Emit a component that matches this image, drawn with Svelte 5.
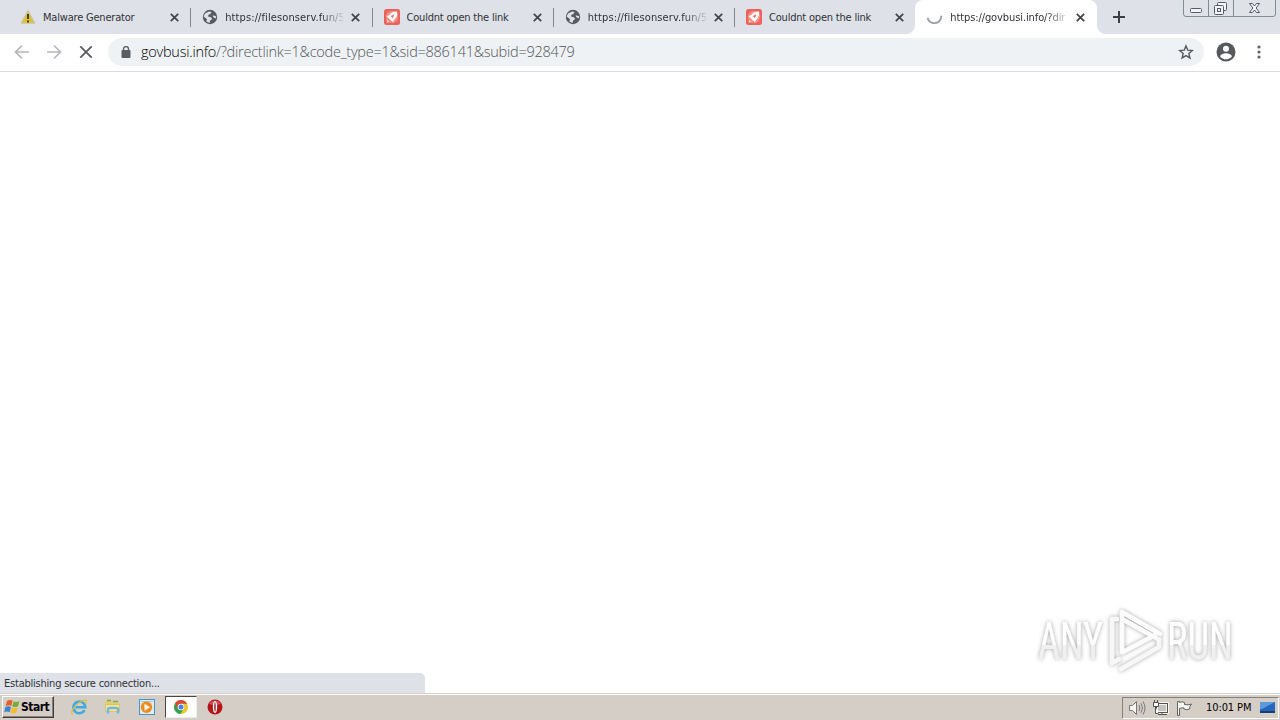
<script>
  const tabs = [
    { icon: 'warn', title: 'Malware Generator' },
    { icon: 'globe', title: 'https://filesonserv.fun/5' },
    { icon: 'rocket', title: 'Couldnt open the link' },
    { icon: 'globe', title: 'https://filesonserv.fun/5' },
    { icon: 'rocket', title: 'Couldnt open the link' },
    { icon: 'spin', title: 'https://govbusi.info/?dir', active: true }
  ];
</script>

<div class="screen">
  <header class="strip">
    {#each tabs as tab, i}
      <div class="tab {tab.icon}" class:active={tab.active} class:sep={i > 0 && !tab.active}>
        <svg class="fav" width="16" height="16" viewBox="0 0 16 16">
          {#if tab.icon === 'warn'}
            <path d="M7 2 13.500 14H.5Z" fill="#dfc02a" stroke="#cdc294" stroke-width="1.500" stroke-linejoin="round" />
            <path d="M7 5v5M7 11.5v2" stroke="#38331c" stroke-width="1.8" />
          {:else if tab.icon === 'globe'}
            <circle cx="8" cy="8" r="7.2" fill="#565b60" />
            <path d="M3 4.5 7 2.4 9.6 3 8.4 5 6.5 5.8 6 7.4 9 8.2 10.2 10 8.2 11.4 7.5 14 4.3 12.4 5 10.3 1.6 7.5ZM10.5 6.2 14.3 7.3 13.7 9.6 11.4 8.3Z" fill="#dee1e6" />
          {:else if tab.icon === 'rocket'}
            <rect width="16" height="16" rx="2.5" fill="#ee625d" />
            <circle cx="8" cy="8" r="6.200" fill="#f28c82" />
            <path d="M13.2 2.6C9.5 2.1 7 3.700 5.200 6L2.700 7.2 4.4 9 7 11.5 9 13.300 10.100 10.700C12.500 9 13.700 6.2 13.2 2.6Z" fill="#fff" />
            <path d="M10.500 5 8.800 9.500 8 8 6.500 7.300Z" fill="#ee6b65" />
            <path d="M3 10.2 5.7 13 2.700 13.700Z" fill="#ffe2b0" />
          {:else}
            <path d="M.5 8.8A7 7 0 0 0 14.3 6.8" fill="none" stroke="#9b9ea2" stroke-width="1.8" />
          {/if}
        </svg>
        <span class="title" class:url={tab.title.startsWith('http')}>{tab.title}</span>
        <svg class="close" width="9" height="9" viewBox="0 0 9 9"><path d="m.8.8 7.4 7.4m0-7.4L.8 8.2" stroke="#44474b" stroke-width="1.8" /></svg>
      </div>
    {/each}
    <svg class="plus" width="12" height="12" viewBox="0 0 12 12"><path d="M6 0v12M0 6h12" stroke="#3c4043" stroke-width="2" /></svg>
    <svg class="caption" width="94" height="18" viewBox="0 0 94 18">
      <path d="M.5 -1V14Q.5 16.500 3 16.500H90Q92.500 16.500 92.500 14V-1" fill="#dfe2e6" stroke="#858b95" />
      <path d="M25.500 0v16M50.500 0v16" stroke="#858b95" />
      <g fill="#f4f5f7" stroke="#555b66">
        <rect x="7.500" y="8.500" width="11" height="4" rx="1" />
        <rect x="34.500" y="2.500" width="9" height="8" rx="1" />
        <rect x="31.500" y="5.500" width="9" height="9" rx="1" />
        <rect x="34.500" y="8.500" width="3" height="3" />
        <path d="M66.500 3.500h3l2 2.500 2-2.500h3l-3.400 4.500 3.400 4.500h-3l-2-2.500-2 2.500h-3L69.900 8Z" />
      </g>
    </svg>
  </header>

  <nav class="toolbar">
    <svg class="nav" width="16" height="16" viewBox="0 0 16 16"><path d="M15 8H2M8 1.500 1.500 8 8 14.500" fill="none" stroke="#b5b7ba" stroke-width="1.700" /></svg>
    <svg class="nav" width="16" height="16" viewBox="0 0 16 16"><path d="M1 8h13M8 1.500 14.500 8 8 14.500" fill="none" stroke="#b5b7ba" stroke-width="1.700" /></svg>
    <svg class="nav" width="16" height="16" viewBox="0 0 16 16"><path d="m2.300 2.300 11.400 11.400m0-11.400L2.300 13.700" stroke="#5a5e62" stroke-width="1.900" /></svg>
    <div class="omnibox">
      <svg width="10" height="12" viewBox="0 0 10 12"><path d="M2.500 5V3a2.500 2.500 0 0 1 5 0v2" fill="none" stroke="#5f6368" stroke-width="1.400" /><rect x=".5" y="4" width="9" height="8" rx="1" fill="#5a5e63" /></svg>
      <span class="address"><b>govbusi.info</b>/?directlink=1&amp;code_type=1&amp;sid=886141&amp;subid=928479</span>
      <svg class="star" width="16" height="16" viewBox="0 0 16 16"><path d="m8 1.900 1.750 4.200 4.550.38-3.450 3 1.050 4.450L8 11.550l-3.900 2.380 1.050-4.450-3.450-3 4.550-.38Z" fill="none" stroke="#55595e" stroke-width="1.400" /></svg>
    </div>
    <svg class="user" width="20" height="20" viewBox="0 0 20 20"><circle cx="10" cy="10" r="9.500" fill="#55595e" /><circle cx="10" cy="6.800" r="3" fill="#fff" /><path d="M4 14.200c1.500-4 10.500-4 12 0-3 4.200-9 4.200-12 0Z" fill="#fff" /></svg>
    <svg class="dots" width="4" height="14" viewBox="0 0 4 14" fill="#5f6368"><circle cx="2" cy="2" r="1.600" /><circle cx="2" cy="7" r="1.600" /><circle cx="2" cy="12" r="1.600" /></svg>
  </nav>

  <main>
    <svg class="mark" width="204" height="70" viewBox="0 0 204 70">
      <defs>
        <linearGradient id="fade" x1="0" y1="0" x2="0" y2="1"><stop offset=".56" stop-color="#fff" /><stop offset=".56" stop-color="#f0f0f0" /></linearGradient>
        <filter id="glow" x="-10%" y="-20%" width="120%" height="140%"><feDropShadow dx="0" dy="0" stdDeviation="1.900" flood-color="#777" flood-opacity=".7" /></filter>
      </defs>
      <g filter="url(#glow)">
        <g fill="url(#fade)" font-family="Roboto, sans-serif" font-size="51">
          <text x="4" y="54" textLength="65" lengthAdjust="spacingAndGlyphs">ANY</text>
          <text x="133" y="54" textLength="66" lengthAdjust="spacingAndGlyphs">RUN</text>
        </g>
        <g fill="none" stroke="#fcfcfc" stroke-width="4.500" stroke-linejoin="round" stroke-linecap="round">
          <path d="M88 47V7l38 22M88 14l36 20M89 47l32-17" />
          <path d="M83 14h-5v44l7-4M87 64l38-22v-8" stroke="#f7f7f7" />
        </g>
      </g>
    </svg>
  </main>
  <div class="status"><span>Establishing secure connection...</span></div>

  <footer class="taskbar">
    <div class="start">
      <svg width="17" height="16" viewBox="0 0 17 16"><path d="M3 2q3-2 5.500-.2L7.300 7Q5 5.300 1.700 7Z" fill="#e75b24" /><path d="M9.500 2.200q3 1.500 6-.3L14 7.200q-3 1.700-5.700.2Z" fill="#75ad36" /><path d="M1.400 8Q4 6.400 7 8L5.700 13.200q-2.700-1.500-5.500 0Z" fill="#3d83cf" /><path d="M8 8.500q3 1.500 5.800-.2l-1.400 5.200q-3 2-5.700.2Z" fill="#f6bc2b" /></svg>
      <span>Start</span>
    </div>
    <div class="task">
      <svg width="18" height="18" viewBox="0 0 18 18"><path d="M14.500 12.200A5.900 5.900 0 1 1 15.200 9.300H5.500" fill="none" stroke="#3fabdf" stroke-width="2.600" /><path d="M3 16C-1 16 4 7 11 3.500c5-2.700 6.500-1 4.500 1.800" fill="none" stroke="#dfbd4e" stroke-width="1.300" /></svg>
    </div>
    <div class="task">
      <svg width="18" height="18" viewBox="0 0 18 18"><path d="M1.500 3h5l1 1.500h8V14h-14Z" fill="#e8cc69" /><path d="M3 2.500h4M9 3.500h5" stroke="#71b052" stroke-width="1.500" /><path d="M1.500 6.500h14v7h-14Z" fill="#f6e59a" stroke="#cdb35b" stroke-width=".6" /><path d="M4 15.500v-4q0-1.500 2-1.500h6q2 0 2 1.500v4" fill="none" stroke="#70b8de" stroke-width="2.400" /></svg>
    </div>
    <div class="task">
      <svg width="18" height="18" viewBox="0 0 18 18"><rect x="1.500" y="1.500" width="15" height="15" fill="#d8edfa" stroke="#4b91c3" /><path d="M3 3.500h12" stroke="#9acbe8" /><circle cx="8.500" cy="9.200" r="5.700" fill="#f18a18" /><path d="m6.500 5.700 5.500 3.500-5.500 3.500Z" fill="#fff" /></svg>
    </div>
    <div class="task pressed">
      <svg width="16" height="16" viewBox="0 0 16 16"><circle cx="8" cy="8" r="7" fill="#f0c52c" /><path d="M8 8 4.500 10.500 1.900 4.500A7 7 0 0 1 14.200 4.700H8Z" fill="#dc4637" /><path d="M1.900 4.500A7 7 0 0 0 7.500 15L10.500 10 5 9.800Z" fill="#35a253" /><circle cx="8" cy="8" r="3.300" fill="#fff" /><circle cx="8" cy="8" r="2.500" fill="#4284e8" /></svg>
    </div>
    <div class="task">
      <svg width="16" height="16" viewBox="0 0 16 16"><circle cx="8" cy="8" r="7.500" fill="#b31519" /><path d="M2 5a7 7 0 0 1 12 0Q8 7 2 5Z" fill="#cf5050" /><ellipse cx="8" cy="8" rx="2.200" ry="6" fill="#fff" /><ellipse cx="8" cy="8" rx=".7" ry="4.700" fill="#8d1015" /></svg>
    </div>
    <div class="tray">
      <svg width="18" height="16" viewBox="0 0 18 16" fill="none" stroke="#77787a"><path d="M1.500 5.500h3l4-4v13l-4-4h-3Z" fill="#f5f4f2" /><path d="M11 5q1.500 3 0 6M13 3.200q3 4.800 0 9.600M15 1.500q4 6.500 0 13" /></svg>
      <svg width="18" height="16" viewBox="0 0 18 16" fill="none" stroke="#55534f"><rect x="4.500" y="3.500" width="11" height="9" fill="#c4c3c0" stroke="#f5f5f5" stroke-width="3" /><rect x="4.500" y="3.500" width="11" height="9" /><path d="M6 14.500h9M10 12.500v2" /><path d="M1.500 2.500h5v4h-5ZM2.500 0v2.500m3-2.500v2.500M3.500 6.500v7h3" fill="#fff" /></svg>
      <svg width="18" height="16" viewBox="0 0 18 16"><path d="M1.500 15.500V1.500H3.500V2.500Q6 1 8.500 2.500V4.500Q12 5.500 15.500 4Q13.500 6 13.500 9Q11 10.500 8 9V8Q6 7.500 3.500 8.500V15.500Z" fill="#f7f6f4" stroke="#65635f" /></svg>
      <span>10:01 PM</span>
      <svg class="desk" width="17" height="13" viewBox="0 0 17 13"><path d="M1 1h15v9H1Z" fill="#2467bd" /><path d="M1 1h15L3 8H1Z" fill="#5d9ada" /><path d="M1 10h15v2H1Z" fill="#193e70" /></svg>
    </div>
  </footer>
</div>

<style>
  :global(body) { margin: 0; }
  .screen { width: 1280px; height: 720px; display: flex; flex-direction: column; background: #fff; overflow: hidden; font: 11px "DejaVu Sans Condensed", "DejaVu Sans", sans-serif; font-stretch: condensed; color: #303236; }
  svg { flex: none; display: block; }
  .strip { height: 34px; flex: none; background: #dee1e8; display: flex; align-items: center; padding-left: 9px; box-sizing: border-box; }
  .tab { width: 181.25px; height: 34px; flex: none; display: flex; align-items: center; padding: 0 11px 0 12px; box-sizing: border-box; position: relative; }
  .sep::before { content: ''; position: absolute; left: 0; top: 8px; width: 1px; height: 19px; background: #85888e; }
  .title { margin-left: 7px; width: 118px; overflow: hidden; white-space: nowrap; letter-spacing: -0.2px; line-height: 18px; padding-top: 1px; }
  .warn .title { margin-left: 6px; width: 119px; }
  .title.url { letter-spacing: 0.1px; mask-image: linear-gradient(90deg, #000 96px, transparent 121px); }
  .active .title.url { letter-spacing: -0.1px; }
  .close { margin-left: 8px; }
  .active { background: #fff; border-radius: 8px 8px 0 0; }
  .active::before, .active::after { content: ''; position: absolute; bottom: 0; width: 8px; height: 8px; }
  .active::before { left: -8px; background: radial-gradient(circle at 0 0, transparent 7.5px, #fff 8px); }
  .active::after { right: -8px; background: radial-gradient(circle at 100% 0, transparent 7.5px, #fff 8px); }
  .plus { margin-left: 16.5px; }
  .caption { margin-left: 58px; align-self: flex-start; }
  .toolbar { height: 38px; flex: none; box-sizing: border-box; border-bottom: 1px solid #dadce0; display: flex; align-items: center; padding: 0 0 1px 14px; }
  .nav { margin-right: 16px; }
  .omnibox { width: 1096px; height: 28px; margin-left: -2px; box-sizing: border-box; border-radius: 14px; background: #eff2f5; display: flex; align-items: center; padding: 0 10px 0 13px; }
  .address { margin-left: 10px; flex: 1; white-space: nowrap; font: 300 14.5px/20px "Open Sans", sans-serif; letter-spacing: -0.25px; color: #50555b; }
  .address b { font-weight: 300; color: #000; }
  .user { margin-left: 12px; }
  .dots { margin-left: 20.5px; }
  main { flex: 1; min-height: 0; display: flex; justify-content: flex-end; align-items: flex-end; padding-right: 42px; }
  .mark { margin-bottom: -2px; overflow: visible; }
  .status { height: 20px; flex: none; }
  .status span { display: block; width: 425px; height: 20px; box-sizing: border-box; padding-left: 4px; line-height: 21px; background: #dee1e8; border-radius: 0 5px 0 0; letter-spacing: -0.22px; }
  .taskbar { height: 27px; flex: none; box-sizing: border-box; background: #d5cec7; border-top: 1px solid #d5d0c7; box-shadow: inset 0 1px #fff; display: flex; align-items: center; padding: 0 0 1px 2px; }
  .start { width: 52px; height: 22px; margin: 1px 9px 0 0; box-sizing: border-box; display: flex; align-items: center; padding-left: 1px; border: 1px solid; border-color: #fff #404040 #404040 #fff; box-shadow: inset -1px -1px #888278; color: #000; }
  .start span { font: bold 12px "DejaVu Sans Condensed", sans-serif; font-stretch: condensed; letter-spacing: -0.5px; }
  .task { width: 32px; height: 22px; margin: 1px 2px 0 0; box-sizing: border-box; display: flex; align-items: center; justify-content: center; }
  .pressed { background: #fff; border: 1px solid; border-color: #4a4742 #eee #eee #4a4742; }
  .tray { width: 157px; height: 22px; margin: 2px 1px 0 auto; box-sizing: border-box; border: 1px solid; border-color: #858078 #fff #fff #858078; display: flex; align-items: center; padding-left: 5px; gap: 6px; color: #000; }
  .tray span { margin-left: 6px; width: 47px; white-space: nowrap; letter-spacing: -0.1px; }
  .desk { margin-left: 0; }
</style>
